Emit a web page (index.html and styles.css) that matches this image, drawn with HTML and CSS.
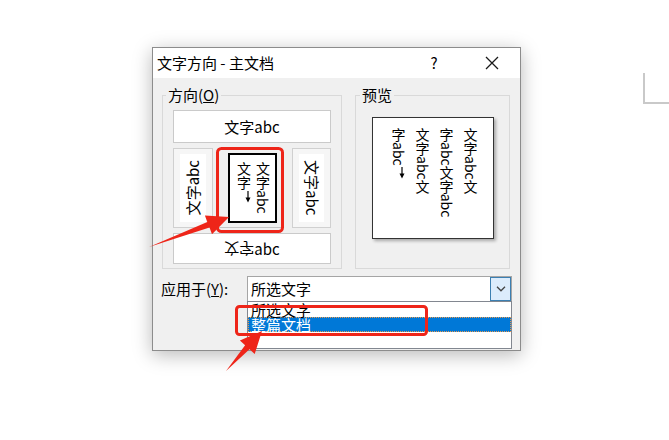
FILE: index.html
```html
<!DOCTYPE html>
<html lang="zh-CN">
<head>
<meta charset="utf-8">
<title>文字方向 - 主文档</title>
<link rel="stylesheet" href="styles.css">
</head>
<body>
<div class="page-mark"></div>
<div class="desk">
  <div class="dialog">
    <div class="titlebar">
      <span class="title">文字方向 - 主文档</span>
      <span class="help">?</span>
      <span class="close"><svg width="14" height="14" viewBox="0 0 14 14"><path d="M1 1L13 13M13 1L1 13" stroke="#1a1a1a" stroke-width="1.3" fill="none"/></svg></span>
    </div>
    <div class="content">
      <div class="groups">
        <fieldset class="grp grp-dir">
          <legend>方向(<u>O</u>)</legend>
          <div class="opt opt-h"><span>文字abc</span></div>
          <div class="opt-row">
            <div class="opt opt-v"><div class="vwrap"><span class="rot-up">文字abc</span></div></div>
            <div class="opt opt-sel"><div class="sel-inner">文字abc<br>文字<svg class="darr" width="6" height="12" viewBox="0 0 6 12"><path d="M3 0V8" stroke="#000" stroke-width="1.2"/><path d="M0.5 6.5H5.5L3 11.5Z" fill="#000"/></svg></div></div>
            <div class="opt opt-v opt-v-right"><div class="vwrap"><span class="rot-down">文字abc</span></div></div>
          </div>
          <div class="opt opt-h opt-h-bottom"><span class="flip">文字</span><span>abc</span></div>
        </fieldset>
        <fieldset class="grp grp-prev">
          <legend>预览</legend>
          <div class="paper">文字abc文<br>字abc文字abc<br>文字abc文<br>字abc<svg class="darr" width="6" height="12" viewBox="0 0 6 12"><path d="M3 0V8" stroke="#000" stroke-width="1.2"/><path d="M0.5 6.5H5.5L3 11.5Z" fill="#000"/></svg></div>
        </fieldset>
      </div>
      <div class="apply">
        <label class="apply-label">应用于(<u>Y</u>):</label>
        <div class="combo">
          <span class="combo-text">所选文字</span>
          <span class="drop"><svg width="10" height="6" viewBox="0 0 10 6"><path d="M1 0.8L5 4.8L9 0.8" stroke="#444" stroke-width="1.3" fill="none"/></svg></span>
          <div class="list">
            <div class="item">所选文字</div>
            <div class="item hi">整篇文档</div>
          </div>
        </div>
      </div>
    </div>
  </div>
</div>
<svg class="annot" width="669" height="440" viewBox="0 0 669 440">
  <rect x="217.5" y="148.5" width="65" height="83" rx="4" fill="none" stroke="#ee2519" stroke-width="3"/>
  <rect x="236.5" y="306.5" width="190" height="28" rx="3" fill="none" stroke="#ee2519" stroke-width="3"/>
  <polygon points="149,247 207.3,222 204.9,215.5 229,217 212,234.2 209.5,227.6" fill="#ee2519"/>
  <polygon points="226,371 245.1,345.3 239.9,340.6 262,331 254.7,354 249.5,349.3" fill="#ee2519"/>
</svg>
</body>
</html>
```

FILE: styles.css
```css
* { box-sizing: border-box; }

body {
  margin: 0;
  width: 669px;
  height: 440px;
  background: #fff;
  font-family: "Noto Sans CJK SC", "Noto Sans", sans-serif;
  color: #000;
  position: relative;
  overflow: hidden;
}

.page-mark {
  position: absolute;
  left: 643px;
  top: 73px;
  width: 26px;
  height: 31px;
  border-left: 2px solid #c9c9c9;
  border-bottom: 2px solid #c9c9c9;
}

.desk {
  padding: 47px 0 0 152px;
}

.dialog {
  width: 369px;
  height: 304px;
  border: 1px solid #8c8c8c;
  background: #f0f0f0;
  box-shadow: 0 4px 18px rgba(0, 0, 0, 0.28);
  display: flex;
  flex-direction: column;
}

.titlebar {
  height: 30px;
  background: #fff;
  display: flex;
  align-items: center;
  padding: 0 5px 0 4px;
  font-size: 15px;
  line-height: 18px;
}

.title { flex: 1; }

.help {
  width: 30px;
  text-align: center;
}

.close {
  width: 46px;
  margin-left: 20px;
  display: flex;
  justify-content: center;
}

.content {
  flex: 1;
  padding: 8px 0 0 9px;
}

.groups {
  display: flex;
  gap: 13px;
}

.grp {
  margin: 0;
  min-width: 0;
  border: 1px solid #d9d9d9;
  padding: 6px 10px 4px 10px;
}

.grp legend {
  font-size: 15px;
  line-height: 18px;
  padding: 0 2px;
  margin-left: -7px;
}

.grp-dir { width: 180px; }

.grp-prev {
  width: 155px;
  padding: 6px 0 0 0;
}

.grp-prev legend { margin-left: 4px; }

.opt {
  background: #fff;
  border: 1px solid #cacaca;
  font-size: 15px;
  line-height: 18px;
}

.opt-h {
  height: 33px;
  display: flex;
  align-items: center;
  justify-content: center;
}

.opt-h-bottom { height: 31px; }

.flip {
  display: inline-block;
  transform: scaleY(-1);
}

.opt-row {
  display: flex;
  height: 80px;
  margin: 5px 0;
}

.opt-v {
  width: 40px;
  background: #f6f6f6;
  border-color: #d0d0d0;
  padding: 5px 6px;
  display: flex;
}

.opt-v-right { width: 39px; }

.vwrap {
  flex: 1;
  background: #fff;
  display: flex;
  align-items: center;
  justify-content: center;
}

.rot-up {
  writing-mode: vertical-rl;
  text-orientation: sideways;
  transform: rotate(180deg);
}

.rot-down {
  writing-mode: vertical-rl;
  text-orientation: sideways;
}

.opt-sel {
  width: 64px;
  margin: 0 10px 0 5px;
  background: #f0f0f0;
  border-color: #c4c4c4;
  padding: 4px 4px 4px 9px;
  display: flex;
}

.sel-inner {
  flex: 1;
  border: 2px solid #000;
  background: #fff;
  writing-mode: vertical-rl;
  font-size: 14px;
  line-height: 19px;
  padding: 7px 3px 0 0;
}

.darr {
  vertical-align: middle;
  margin-top: 1px;
}

.paper {
  width: 122px;
  height: 122px;
  margin: 7px auto 0;
  background: #fff;
  border: 1px solid #333;
  box-shadow: 2px 2px 3px rgba(0, 0, 0, 0.3);
  writing-mode: vertical-rl;
  font-size: 14px;
  line-height: 24px;
  padding: 10px 10px 0 0;
}

.apply {
  display: flex;
  align-items: center;
  margin-top: 7px;
}

.apply-label {
  width: 86px;
  margin-left: -1px;
  font-size: 15px;
  line-height: 18px;
}

.combo {
  position: relative;
  width: 265px;
  height: 26px;
  border: 1px solid #a5a5a5;
  background: #fff;
  display: flex;
  align-items: center;
  padding-left: 3px;
  font-size: 15px;
  line-height: 18px;
}

.combo-text { flex: 1; }

.drop {
  width: 21px;
  height: 24px;
  border: 1px solid #3c7fb1;
  background: #dcecfc;
  display: flex;
  align-items: center;
  justify-content: center;
}

.list {
  position: absolute;
  left: -1px;
  top: 24px;
  width: 265px;
  height: 48px;
  border: 1px solid #828790;
  background: #fff;
}

.item {
  height: 15px;
  line-height: 15px;
  padding-left: 3px;
  font-size: 15px;
  white-space: nowrap;
}

.item.hi {
  background: #0078d7;
  color: #fff;
  border: 1px dotted #e99a4e;
  padding-left: 2px;
  line-height: 13px;
}

.annot {
  position: absolute;
  left: 0;
  top: 0;
  pointer-events: none;
}
```
